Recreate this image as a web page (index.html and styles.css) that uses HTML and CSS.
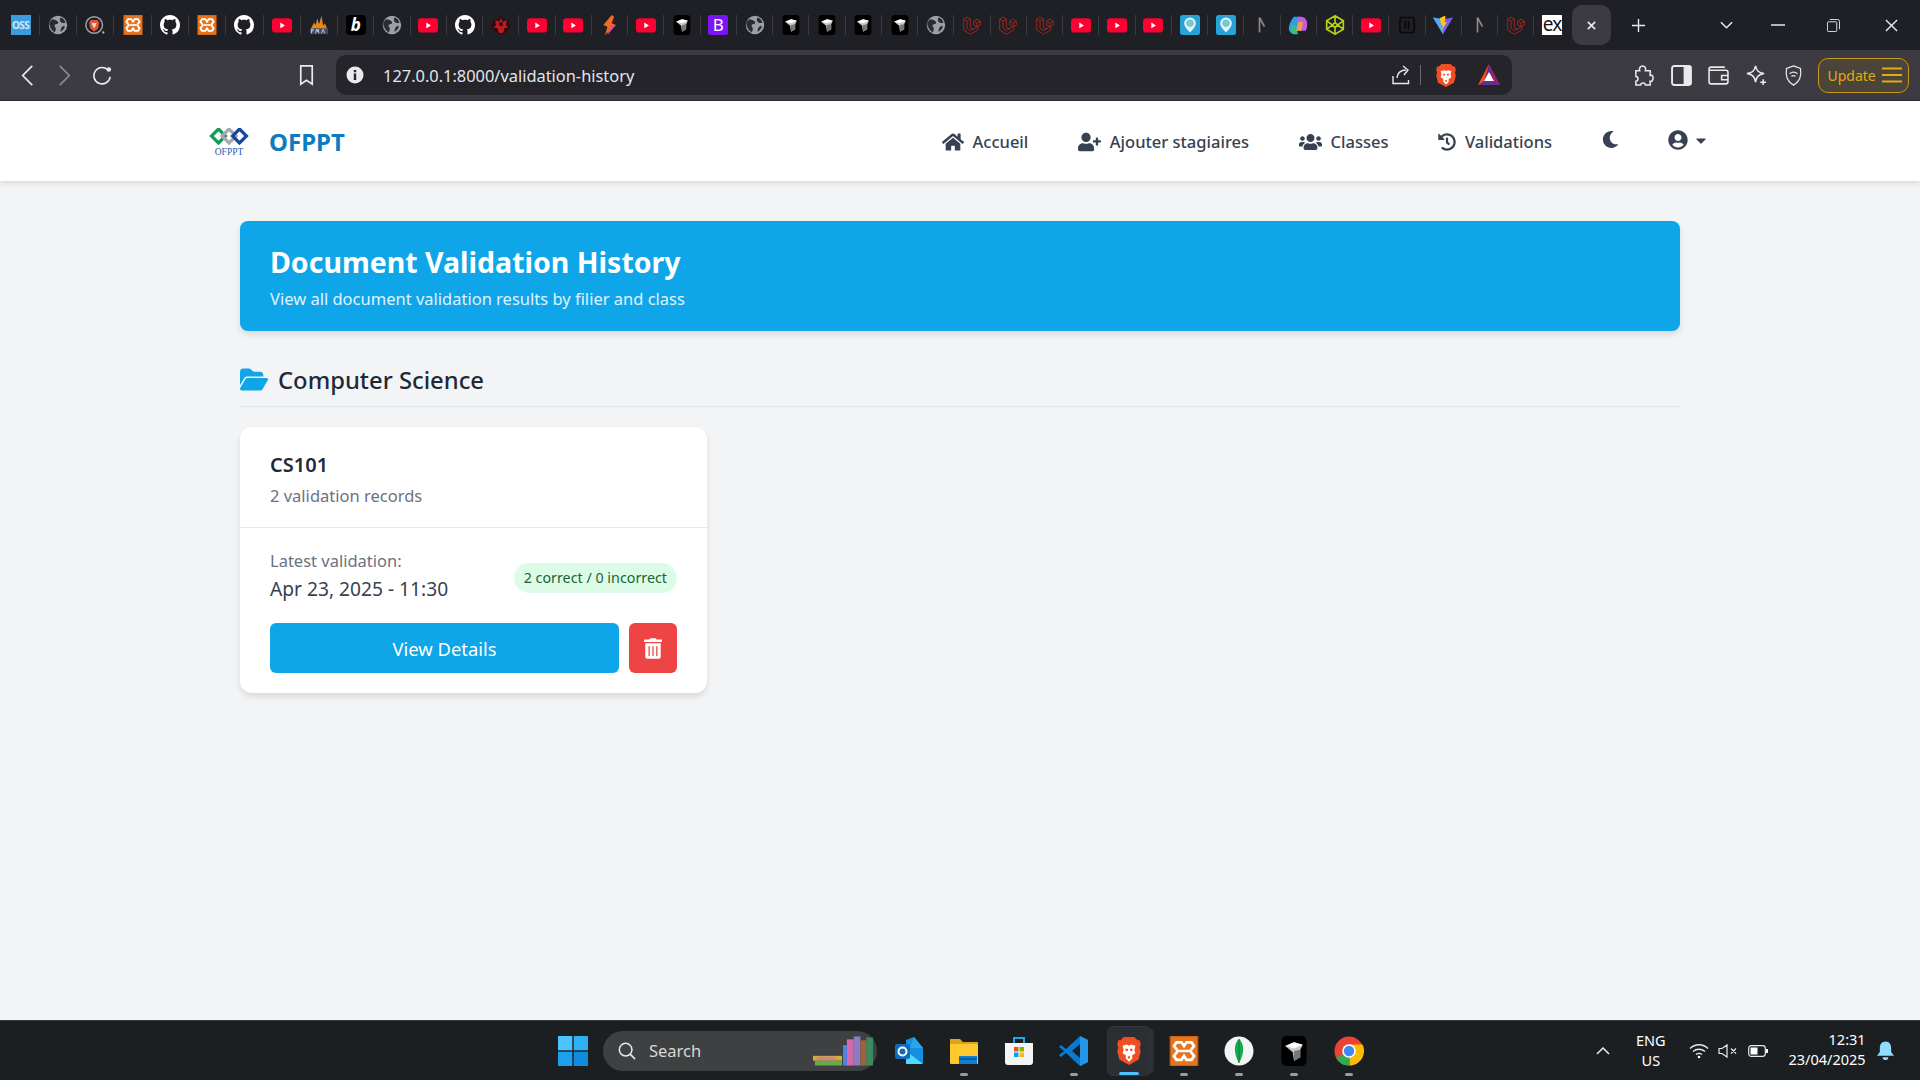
FILE: index.html
```html
<!DOCTYPE html>
<html lang="en">
<head>
  <meta charset="UTF-8">
  <title>Document Validation History</title>
  <link rel="stylesheet" href="styles.css">
</head>
<body>
  <svg class="defs" aria-hidden="true">
    <symbol id="globe" viewBox="0 0 24 24"><circle cx="12" cy="12" r="11" fill="#9aa0a6"/><path d="M5 5c3 0 5 1 7 3 1 2-1 3-3 3-2 1-1 3 0 4 1 2 0 4-1 6-3-2-5-5-6-8-1-3 0-6 3-8zM15 3c3 1 5 3 6 6-2 1-4 1-6-1-1-2-1-3 0-5zM19 13c1 0 1 1 1 2-1 2-3 4-5 5 0-3 1-6 4-7z" fill="#2b2c30"/></symbol>
    <symbol id="brave" viewBox="0 0 24 28"><path d="M7 1h10l3 3h2l1 4-1 3 1 3-2 8-9 5-9-5-2-8 1-3-1-3 1-4h2z" fill="#f04e23"/><path d="M6 9l4-1 2 1 2-1 4 1-1 4 1 3-3 2v3l-3 3-3-3v-3l-3-2 1-3z" fill="#fff"/><path d="M8.500 12h2.500v2H9zM13 12h2.500L15 14h-2zM11 19h2v2h-2z" fill="#f04e23"/></symbol>
    <symbol id="brave-ring" viewBox="0 0 24 24"><circle cx="11" cy="12" r="10" fill="none" stroke="#9aa0a6" stroke-width="1.800"/><path d="M7 6h8l2 3-1 7-5 4-5-4-1-7z" fill="#e0523a"/><path d="M8 9l3 1 3-1-1 4-2 3-2-3z" fill="#f5d5cc"/><circle cx="22" cy="21" r="1.400" fill="#bbb"/></symbol>
    <symbol id="xampp" viewBox="0 0 24 24"><rect x="1" width="22" height="24" fill="#e8741e"/><rect x="1" width="22" height="24" fill="none" stroke="#b85a14"/><path d="M6 5h4l2 3 2-3h4l2 3-3 4 3 4-2 3h-4l-2-3-2 3H6l-2-3 3-4-3-4z" fill="none" stroke="#fff" stroke-width="2.200"/><path d="M8 12h8" stroke="#fff" stroke-width="2"/></symbol>
    <symbol id="gh" viewBox="0 0 16 16"><path fill="#fff" d="M8 0C3.58 0 0 3.58 0 8c0 3.54 2.29 6.53 5.47 7.59.4.07.55-.17.55-.38 0-.19-.01-.82-.01-1.49-2.01.37-2.53-.49-2.69-.94-.09-.23-.48-.94-.82-1.13-.28-.15-.68-.52-.01-.53.63-.01 1.08.58 1.23.82.72 1.21 1.87.87 2.33.66.07-.52.28-.87.51-1.07-1.78-.2-3.64-.89-3.64-3.95 0-.87.31-1.59.82-2.15-.08-.2-.36-1.02.08-2.12 0 0 .67-.21 2.2.82.64-.18 1.32-.27 2-.27.68 0 1.36.09 2 .27 1.53-1.04 2.2-.82 2.2-.82.44 1.1.16 1.92.08 2.12.51.56.82 1.27.82 2.15 0 3.07-1.87 3.75-3.65 3.95.29.25.54.73.54 1.48 0 1.07-.01 1.93-.01 2.2 0 .21.15.46.55.38A8.013 8.013 0 0016 8c0-4.42-3.58-8-8-8z"/></symbol>
    <symbol id="yt" viewBox="0 0 24 24"><rect y="4" width="24" height="17" rx="4" fill="#ff0033"/><path d="M10 9l5.500 3.500L10 16z" fill="#fff"/></symbol>
    <symbol id="pma" viewBox="0 0 24 24"><path d="M2 17L6 9l2 3 2-8 2 7 3-10 2 12 2-3 3 7z" fill="#e08a1e"/><rect x="1" y="16" width="22" height="7" fill="#3c4a68"/><path d="M3 22v-5h2v2H3M8 22l1-5 1 3 1-3 1 5M15 22l2-5 2 5" fill="none" stroke="#cfd6e6" stroke-width="1"/></symbol>
    <symbol id="red" viewBox="0 0 24 24"><path d="M12 1l3 4 6 1 2 8-5 7-6 2-6-2-5-7 2-8 6-1z" fill="#2a0a0c"/><path d="M12 3l2 5 5-2-1 6 3 3-5 1-1 5-3 1-3-1-1-5-5-1 3-3-1-6 5 2z" fill="#c4161c"/><circle cx="12" cy="11" r="2.500" fill="#1f1f26"/></symbol>
    <symbol id="bolt" viewBox="0 0 24 24"><path d="M14 0L4 12l5 2-3 10 13-12-5-2 3-8z" fill="#f26b21"/><path d="M14 12l5 0-10 12 3-10z" fill="#d8518e"/></symbol>
    <symbol id="cube" viewBox="0 0 24 24"><rect x="2" width="20" height="24" rx="4" fill="#000"/><path d="M5 8l7-3 7 2-2 4v6l-5 3-1-7z" fill="#c8c8c8"/><path d="M12 12l5-1v6l-5 3z" fill="#777"/><path d="M5 8l7 2 7-3-7-2z" fill="#fff"/></symbol>
    <symbol id="lara" viewBox="0 0 24 24"><path d="M2 5l4-2.500 4 2.500-4 2.500zM2 5v13l8 5 9-5v-4.500l-9 5-4-2.500V7.500M10 5v10l4 2M14 7.500l4-2.500 4 2.500-4 2.500zM14 7.500v4.500l4 2 4-2V7.500M18 10v4" fill="none" stroke="#b0281e" stroke-width="1"/></symbol>
    <symbol id="pin" viewBox="0 0 24 24"><rect width="24" height="24" rx="3" fill="#27a3d7"/><path d="M12 21c-4-4-7-7-7-11a7 7 0 0 1 14 0c0 4-3 7-7 11z" fill="#e4f4f8"/><circle cx="12" cy="10" r="4.500" fill="#79c7cf"/></symbol>
    <symbol id="copilot" viewBox="0 0 24 24"><path d="M7 2h8l-4 18c-1 2-2 3-4 3-3 0-6-3-6-7 0-4 2-9 6-14z" fill="#2e9fe6"/><path d="M4 12l5 0 3 11H7c-3 0-4-5-3-11z" fill="#38c07a"/><path d="M12 2h4c4 0 7 4 7 9 0 4-1 7-2 8h-8z" fill="#c45be0"/><path d="M12 8h6l-2 11h-6z" fill="#f0a13c"/></symbol>
    <symbol id="green" viewBox="0 0 24 24"><path d="M12 1l10 6v10l-10 6-10-6V7zM12 1v8M2 7l7 5-7 5M22 7l-7 5 7 5M12 23v-8M9 12l3-3 3 3-3 3z" fill="none" stroke="#b5d219" stroke-width="2"/></symbol>
    <symbol id="dark" viewBox="0 0 24 24"><path d="M4 3h16M4 21h16M4 3c-1 6-1 12 0 18M20 3c1 6 1 12 0 18M10 7v10M14 7v10" fill="none" stroke="#0a0a0a" stroke-width="2"/></symbol>
    <symbol id="vite" viewBox="0 0 24 24"><path d="M0 3l12 20L24 3l-12 2z" fill="#7a5cf0"/><path d="M0 3l12 20 0-18z" fill="#55a8f5"/><path d="M14 1L8 4l2 8-1 1 3-1-1 6 6-10-3 1 1-7z" fill="#ffc517"/></symbol>
    <symbol id="nn" viewBox="0 0 24 24"><path d="M9 3v18M9 3l6 11" fill="none" stroke="#8a8a8a" stroke-width="2"/></symbol>
    <symbol id="bat" viewBox="0 0 24 24"><path d="M12 1L1 22h22z" fill="#662d91"/><path d="M12 1L1 22l6-4z" fill="#ff5000"/><path d="M12 1l11 21-6-4z" fill="#9e1f63"/><path d="M12 9l-5 9h10z" fill="#fff"/></symbol>
  </svg>

  <div class="tabstrip">
    <span class="fav"><span class="oss">OSS</span></span>
    <span class="fav"><svg><use href="#globe"/></svg></span>
    <span class="fav"><svg><use href="#brave-ring"/></svg></span>
    <span class="fav"><svg><use href="#xampp"/></svg></span>
    <span class="fav"><svg><use href="#gh"/></svg></span>
    <span class="fav"><svg><use href="#xampp"/></svg></span>
    <span class="fav"><svg><use href="#gh"/></svg></span>
    <span class="fav"><svg><use href="#yt"/></svg></span>
    <span class="fav"><svg><use href="#pma"/></svg></span>
    <span class="fav"><span class="bb">b</span></span>
    <span class="fav"><svg><use href="#globe"/></svg></span>
    <span class="fav"><svg><use href="#yt"/></svg></span>
    <span class="fav"><svg><use href="#gh"/></svg></span>
    <span class="fav"><svg><use href="#red"/></svg></span>
    <span class="fav"><svg><use href="#yt"/></svg></span>
    <span class="fav"><svg><use href="#yt"/></svg></span>
    <span class="fav"><svg><use href="#bolt"/></svg></span>
    <span class="fav"><svg><use href="#yt"/></svg></span>
    <span class="fav"><svg><use href="#cube"/></svg></span>
    <span class="fav"><span class="boot">B</span></span>
    <span class="fav"><svg><use href="#globe"/></svg></span>
    <span class="fav"><svg><use href="#cube"/></svg></span>
    <span class="fav"><svg><use href="#cube"/></svg></span>
    <span class="fav"><svg><use href="#cube"/></svg></span>
    <span class="fav"><svg><use href="#cube"/></svg></span>
    <span class="fav"><svg><use href="#globe"/></svg></span>
    <span class="fav"><svg><use href="#lara"/></svg></span>
    <span class="fav"><svg><use href="#lara"/></svg></span>
    <span class="fav"><svg><use href="#lara"/></svg></span>
    <span class="fav"><svg><use href="#yt"/></svg></span>
    <span class="fav"><svg><use href="#yt"/></svg></span>
    <span class="fav"><svg><use href="#yt"/></svg></span>
    <span class="fav"><svg><use href="#pin"/></svg></span>
    <span class="fav"><svg><use href="#pin"/></svg></span>
    <span class="fav"><svg><use href="#nn"/></svg></span>
    <span class="fav"><svg><use href="#copilot"/></svg></span>
    <span class="fav"><svg><use href="#green"/></svg></span>
    <span class="fav"><svg><use href="#yt"/></svg></span>
    <span class="fav"><svg><use href="#dark"/></svg></span>
    <span class="fav"><svg><use href="#vite"/></svg></span>
    <span class="fav"><svg><use href="#nn"/></svg></span>
    <span class="fav"><svg><use href="#lara"/></svg></span>
    <span class="fav"><span class="ex">ex</span></span>
    <span class="active-tab">
      <svg class="line-icon" viewBox="0 0 12 12"><path d="M2 2l8 8M10 2l-8 8" stroke-width="1.800"/></svg>
    </span>
    <svg class="line-icon new-tab" viewBox="0 0 14 14"><path d="M7 0v14M0 7h14"/></svg>
    <svg class="line-icon tab-menu" viewBox="0 0 14 9"><path d="M1 1l6 6 6-6" stroke-width="1.600"/></svg>
    <svg class="line-icon win-min" viewBox="0 0 14 2"><path d="M0 1h14"/></svg>
    <svg class="line-icon win-max" viewBox="0 0 14 14"><path d="M3 .5h8.500a2 2 0 0 1 2 2V11M1.500 3h8a1 1 0 0 1 1 1v8.500a1 1 0 0 1-1 1h-8a1 1 0 0 1-1-1V4a1 1 0 0 1 1-1z" stroke-width="1"/></svg>
    <svg class="line-icon win-close" viewBox="0 0 14 14"><path d="M1 1l12 12M13 1L1 13"/></svg>
  </div>

  <div class="toolbar">
    <span class="tb-btn"><svg class="line-icon" viewBox="0 0 12 22"><path d="M11 1L1 11l10 10" stroke-width="1.800"/></svg></span>
    <span class="tb-btn dim"><svg class="line-icon" viewBox="0 0 12 22"><path d="M1 1l10 10L1 21" stroke-width="1.800"/></svg></span>
    <span class="tb-btn"><svg class="line-icon reload" viewBox="0 0 22 22"><path d="M18 6a9 9 0 1 0 2 7" stroke-width="1.800"/><circle cx="18.500" cy="5" r="2.500" fill="#e8eaed" stroke="none"/></svg></span>
    <span class="tb-btn bookmark"><svg class="line-icon" viewBox="0 0 16 22"><path d="M2 1h12v19l-6-4-6 4z" stroke-width="1.800"/></svg></span>
    <div class="urlbar">
      <svg class="info" viewBox="0 0 18 18"><circle cx="9" cy="9" r="8.500" fill="#e8eaed"/><path d="M7.800 7.500h2.400V14H7.800zM7.800 4h2.400v2.200H7.800z" fill="#24242a"/></svg>
      <span class="url">127.0.0.1:8000/validation-history</span>
      <span class="url-end">
        <svg class="line-icon share" viewBox="0 0 20 20"><path d="M1 11v7.500h15.500V15M5 13c0-5 4-8 9-8M11 1l5 4-4 5" stroke-width="1.400"/></svg>
        <span class="url-sep"></span>
        <svg class="shield-brave"><use href="#brave"/></svg>
        <svg class="bat-icon"><use href="#bat"/></svg>
      </span>
    </div>
    <span class="tb-btn first-ext"><svg class="line-icon" viewBox="0 0 22 22"><path d="M3 6h4c-1-3 1-5 3-5s4 2 3 5h5v5c3-1 3 2 3 3s-1 4-3 3v4h-5c0-3-5-3-5 0H3v-4c3 0 3-5 0-5z" stroke-width="1.600"/></svg></span>
    <span class="tb-btn"><svg class="side-icon" viewBox="0 0 20 20"><rect x="1" y="1" width="18" height="18" rx="2" fill="none" stroke="#e8eaed" stroke-width="1.800"/><rect x="12" y="1" width="7" height="18" fill="#e8eaed"/></svg></span>
    <span class="tb-btn"><svg class="line-icon" viewBox="0 0 20 20"><path d="M16 2H3a2 2 0 0 0-2 2v12a2 2 0 0 0 2 2h14a2 2 0 0 0 2-2V7a2 2 0 0 0-2-2H1M13 10h6v4h-6z" stroke-width="1.500"/></svg></span>
    <span class="tb-btn"><svg class="line-icon" viewBox="0 0 22 22"><path d="M10 1c1 5 3 7 9 8-6 1-8 3-9 9-1-6-3-8-9-9 6-1 8-3 9-8zM18 15v6M15 18h6" stroke-width="1.600"/></svg></span>
    <span class="tb-btn"><svg class="line-icon" viewBox="0 0 20 24"><path d="M10 1l8 3c1 8 0 14-8 19C2 18 1 12 2 4zM5.500 10c3-2.500 6-2.500 9 0M7.500 13c2-1.500 3-1.500 5 0" stroke-width="1.400"/></svg></span>
    <span class="update">Update
      <svg class="update-lines" viewBox="0 0 20 16"><path d="M0 1.500h20M0 8h20M0 14.500h20" stroke="#e0a916" stroke-width="1.800"/></svg>
    </span>
  </div>

  <nav class="navbar">
    <a class="brand">
      <svg class="logo" viewBox="0 0 40 28">
        <path d="M9.500 1l7 7-7 7-7-7z" fill="none" stroke="#0f9d58" stroke-width="3.200"/>
        <path d="M20 1l7 7-7 7-7-7z" fill="none" stroke="#a5a8ad" stroke-width="3.200"/>
        <path d="M30.500 1l7 7-7 7-7-7z" fill="none" stroke="#17479e" stroke-width="3.200"/>
        <text x="20" y="27" class="logo-text">OFPPT</text>
      </svg>
      <span class="brand-name">OFPPT</span>
    </a>
    <ul class="nav-links">
      <li><svg class="nav-icon home" viewBox="0 0 576 512"><path d="M280.37 148.26L96 300.11V464a16 16 0 0 0 16 16l112.06-.29a16 16 0 0 0 15.92-16V368a16 16 0 0 1 16-16h64a16 16 0 0 1 16 16v95.64a16 16 0 0 0 16 16.05L464 480a16 16 0 0 0 16-16V300L295.67 148.26a12.19 12.19 0 0 0-15.3 0zM571.6 251.47L488 182.56V44.05a12 12 0 0 0-12-12h-56a12 12 0 0 0-12 12v72.61L318.47 43a48 48 0 0 0-61 0L4.34 251.47a12 12 0 0 0-1.6 16.9l25.5 31A12 12 0 0 0 45.15 301l235.22-193.74a12.19 12.19 0 0 1 15.3 0L530.9 301a12 12 0 0 0 16.9-1.6l25.5-31a12 12 0 0 0-1.7-16.93z"/></svg>Accueil</li>
      <li><svg class="nav-icon wide" viewBox="0 0 640 512"><path d="M624 208h-64v-64c0-8.8-7.2-16-16-16h-32c-8.8 0-16 7.2-16 16v64h-64c-8.8 0-16 7.2-16 16v32c0 8.8 7.2 16 16 16h64v64c0 8.8 7.2 16 16 16h32c8.8 0 16-7.2 16-16v-64h64c8.8 0 16-7.2 16-16v-32c0-8.8-7.2-16-16-16zm-400 48c70.7 0 128-57.3 128-128S294.7 0 224 0 96 57.3 96 128s57.3 128 128 128zm89.6 32h-16.7c-22.2 10.2-46.9 16-72.9 16s-50.6-5.8-72.9-16h-16.7C60.2 288 0 348.2 0 422.4V464c0 26.5 21.5 48 48 48h352c26.5 0 48-21.5 48-48v-41.6c0-74.2-60.2-134.4-134.4-134.4z"/></svg>Ajouter stagiaires</li>
      <li><svg class="nav-icon wide" viewBox="0 0 640 512"><path d="M96 224c35.3 0 64-28.7 64-64s-28.7-64-64-64-64 28.7-64 64 28.7 64 64 64zm448 0c35.3 0 64-28.7 64-64s-28.7-64-64-64-64 28.7-64 64 28.7 64 64 64zm32 32h-64c-17.6 0-33.5 7.1-45.1 18.6 40.3 22.1 68.9 62 75.1 109.4h66c17.7 0 32-14.3 32-32v-32c0-35.3-28.7-64-64-64zm-256 0c61.9 0 112-50.1 112-112S381.9 32 320 32 208 82.1 208 144s50.1 112 112 112zm76.8 32h-8.3c-20.8 10-43.9 16-68.5 16s-47.6-6-68.5-16h-8.3C179.6 288 128 339.6 128 403.2V432c0 26.5 21.5 48 48 48h288c26.5 0 48-21.5 48-48v-28.8c0-63.6-51.6-115.2-115.2-115.2zm-223.7-13.4C161.5 263.1 145.6 256 128 256H64c-35.3 0-64 28.7-64 64v32c0 17.7 14.3 32 32 32h65.9c6.3-47.4 34.9-87.3 75.2-109.4z"/></svg>Classes</li>
      <li><svg class="nav-icon history" viewBox="0 0 512 512"><path d="M504 255.531c.253 136.64-111.18 248.372-247.82 248.468-59.015.042-113.223-20.53-155.822-54.911-11.077-8.94-11.905-25.541-1.839-35.607l11.267-11.267c8.609-8.609 22.353-9.551 31.891-1.984C173.062 425.135 212.781 440 256 440c101.705 0 184-82.311 184-184 0-101.705-82.311-184-184-184-48.814 0-93.149 18.969-126.068 49.932l50.754 50.754c10.08 10.08 2.941 27.314-11.313 27.314H24c-8.837 0-16-7.163-16-16V38.627c0-14.254 17.234-21.393 27.314-11.314l49.372 49.372C129.209 34.136 189.552 8 256 8c136.81 0 247.747 110.78 248 247.531zm-180.912 78.784l9.823-12.63c8.138-10.463 6.253-25.542-4.21-33.679L288 256.349V152c0-13.255-10.745-24-24-24h-16c-13.255 0-24 10.745-24 24v135.651l65.409 50.874c10.463 8.137 25.541 6.253 33.679-4.21z"/></svg>Validations</li>
      <li class="moon"><svg class="nav-icon" viewBox="0 0 512 512"><path d="M283.211 512c78.962 0 151.079-35.925 198.857-94.792 7.068-8.708-.639-21.43-11.562-19.35-124.203 23.654-238.262-71.576-238.262-196.954 0-72.222 38.662-138.635 101.498-174.394 9.686-5.512 7.25-20.197-3.756-22.23A258.156 258.156 0 0 0 283.211 0c-141.309 0-256 114.511-256 256 0 141.309 114.511 256 256 256z"/></svg></li>
      <li class="account">
        <svg class="nav-icon" viewBox="0 0 496 512"><path d="M248 8C111 8 0 119 0 256s111 248 248 248 248-111 248-248S385 8 248 8zm0 96c48.6 0 88 39.4 88 88s-39.4 88-88 88-88-39.4-88-88 39.4-88 88-88zm0 344c-58.7 0-111.3-26.6-146.5-68.2 18.8-35.4 55.6-59.8 98.5-59.8 2.4 0 4.8.4 7.1 1.1 13 4.2 26.6 6.9 40.9 6.9 14.3 0 28-2.7 40.9-6.9 2.3-.7 4.7-1.1 7.1-1.1 42.9 0 79.7 24.4 98.5 59.8C359.3 421.4 306.7 448 248 448z"/></svg>
        <svg class="caret" viewBox="0 0 320 512"><path d="M31.3 192h257.3c17.8 0 26.7 21.5 14.1 34.1L174.1 354.8c-7.8 7.8-20.5 7.8-28.3 0L17.2 226.1C4.6 213.5 13.5 192 31.3 192z"/></svg>
      </li>
    </ul>
  </nav>

  <main class="content">
    <section class="hero">
      <h1>Document Validation History</h1>
      <p>View all document validation results by filier and class</p>
    </section>

    <h2 class="filiere">
      <svg class="folder" viewBox="0 0 576 512"><path d="M88.700 223.800L0 375.800V96C0 60.700 28.700 32 64 32H181.500c17 0 33.300 6.700 45.300 18.700l26.500 26.500c12 12 28.300 18.700 45.300 18.700H416c35.300 0 64 28.700 64 64v32H144c-22.800 0-43.800 12.100-55.300 31.800zm27.600 16.100C122.100 230 132.600 224 144 224H544c11.500 0 22 6.100 27.700 16.100s5.700 22.200-.1 32.100l-112 192C453.900 474 443.400 480 432 480H32c-11.500 0-22-6.100-27.700-16.100s-5.700-22.200 .1-32.100l112-192z"/></svg>
      Computer Science
    </h2>

    <article class="card">
      <div class="card-head">
        <h3>CS101</h3>
        <p>2 validation records</p>
      </div>
      <div class="card-body">
        <div class="latest">
          <div>
            <p class="latest-label">Latest validation:</p>
            <p class="latest-date">Apr 23, 2025 - 11:30</p>
          </div>
          <span class="badge">2 correct / 0 incorrect</span>
        </div>
        <div class="actions">
          <button class="btn-view">View Details</button>
          <button class="btn-delete">
            <svg viewBox="0 0 448 512"><path d="M32 464a48 48 0 0 0 48 48h288a48 48 0 0 0 48-48V128H32zm272-256a16 16 0 0 1 32 0v224a16 16 0 0 1-32 0zm-96 0a16 16 0 0 1 32 0v224a16 16 0 0 1-32 0zm-96 0a16 16 0 0 1 32 0v224a16 16 0 0 1-32 0zM432 32H312l-9.4-18.7A24 24 0 0 0 281.1 0H166.8a23.72 23.72 0 0 0-21.4 13.3L136 32H16A16 16 0 0 0 0 48v32a16 16 0 0 0 16 16h416a16 16 0 0 0 16-16V48a16 16 0 0 0-16-16z"/></svg>
          </button>
        </div>
      </div>
    </article>
  </main>

  <footer class="taskbar">
    <svg class="start" viewBox="0 0 30 30">
      <rect width="14.300" height="14.300" fill="#4cc2ff"/><rect x="15.700" width="14.300" height="14.300" fill="#2fb0f5"/>
      <rect y="15.700" width="14.300" height="14.300" fill="#1d9ff0"/><rect x="15.700" y="15.700" width="14.300" height="14.300" fill="#0f8be0"/>
    </svg>
    <div class="search">
      <svg class="line-icon search-icon" viewBox="0 0 20 20"><circle cx="8.500" cy="8.500" r="7" stroke-width="1.700"/><path d="M13.500 13.500L19 19" stroke-width="1.700"/></svg>
      <span>Search</span>
      <svg class="books" viewBox="0 0 64 32">
        <rect x="0" y="21" width="30" height="5" fill="#c9b13c"/><rect x="4" y="22" width="20" height="3" fill="#e07a9a"/>
        <rect x="2" y="26" width="28" height="5" fill="#6aa84f"/>
        <rect x="31" y="10" width="4" height="21" fill="#4a86e8"/><rect x="35" y="4" width="7" height="27" fill="#d66aa8"/>
        <rect x="42" y="1" width="7" height="30" fill="#8e7cc3"/><rect x="49" y="5" width="6" height="26" fill="#a0623a"/>
        <rect x="55" y="2" width="7" height="29" fill="#3d8a5f"/>
      </svg>
    </div>
    <div class="apps">
      <span class="app"><svg viewBox="0 0 30 30"><path d="M12 4l8-3 9 11v15l-17 1z" fill="#1490df"/><path d="M20 1l9 11H16z" fill="#28a8ea"/><path d="M12 15l17 13H12z" fill="#50d9ff"/><rect x="1" y="8" width="15" height="15" rx="2" fill="#0f6cbd"/><circle cx="8.500" cy="15.500" r="4" fill="none" stroke="#fff" stroke-width="2"/></svg></span>
      <span class="app running"><svg viewBox="0 0 30 30"><path d="M1 3h10l3 3h15v5H1z" fill="#d9a520"/><rect x="1" y="8" width="28" height="20" rx="1" fill="#ffc82c"/><rect x="10" y="20" width="18" height="8" fill="#0f7fd4"/><rect x="10" y="22" width="18" height="2" fill="#0b5fa8"/></svg></span>
      <span class="app"><svg viewBox="0 0 30 30"><path d="M10 7V2h10v5" fill="none" stroke="#2aa4e8" stroke-width="2"/><path d="M1 7h28v19a3 3 0 0 1-3 3H4a3 3 0 0 1-3-3z" fill="#f4f4f4"/><rect x="10" y="11" width="4.500" height="4.500" fill="#f25022"/><rect x="15.500" y="11" width="4.500" height="4.500" fill="#7fba00"/><rect x="10" y="16.500" width="4.500" height="4.500" fill="#00a4ef"/><rect x="15.500" y="16.500" width="4.500" height="4.500" fill="#ffb900"/></svg></span>
      <span class="app running"><svg viewBox="0 0 30 30"><path d="M21 0l8 4v22l-8 4L7 17l-5 4-2-2 5-4-5-4 2-2 5 4z" fill="#0a7ad1"/><path d="M21 8l-8 7 8 7z" fill="#1c1f22"/><path d="M21 0l8 4v22l-8 4z" fill="#2196e8"/></svg></span>
      <span class="app active"><svg viewBox="0 0 24 28"><use href="#brave"/></svg></span>
      <span class="app running"><svg viewBox="0 0 24 24"><use href="#xampp"/></svg></span>
      <span class="app running"><svg viewBox="0 0 30 30"><circle cx="15" cy="15" r="14.500" fill="#f4f4f4"/><path d="M15 3c5 4 6 14 0 24-6-10-5-20 0-24z" fill="#13aa52"/><path d="M15 3v24" stroke="#0b7a3a"/></svg></span>
      <span class="app running"><svg viewBox="0 0 24 24"><use href="#cube"/></svg></span>
      <span class="app running"><svg viewBox="0 0 30 30"><circle cx="15" cy="15" r="14.500" fill="#ea4335"/><path d="M15 15L2 22a14.500 14.500 0 0 0 14 7.500z" fill="#34a853"/><path d="M15 8.500h13.500a14.500 14.500 0 0 1-12.500 21z" fill="#fbbc05"/><circle cx="15" cy="15" r="6.800" fill="#fff"/><circle cx="15" cy="15" r="5.200" fill="#4285f4"/></svg></span>
    </div>
    <div class="tray">
      <svg class="line-icon tray-up" viewBox="0 0 14 8"><path d="M1 7l6-6 6 6" stroke-width="1.500"/></svg>
      <div class="lang"><span>ENG</span><span>US</span></div>
      <svg class="line-icon wifi" viewBox="0 0 20 16"><path d="M1 5.500c5-5 13-5 18 0M4 8.500c3.500-3 8.500-3 12 0M7 11.500c2-1.500 4-1.500 6 0" stroke-width="1.300"/><circle cx="10" cy="14" r="1.300" fill="#fff" stroke="none"/></svg>
      <svg class="line-icon speaker" viewBox="0 0 20 16"><path d="M1 5.500h3L9 2v12L4 10.500H1zM13 5.500l5 5M18 5.500l-5 5" stroke-width="1.200"/></svg>
      <svg class="line-icon battery" viewBox="0 0 20 12"><rect x=".7" y=".7" width="16.600" height="10.600" rx="2.500" stroke-width="1.200"/><rect x="2.500" y="2.500" width="7" height="7" fill="#fff" stroke="none"/><rect x="18" y="4" width="2" height="4" fill="#fff" stroke="none"/></svg>
      <div class="clock"><span>12:31</span><span>23/04/2025</span></div>
      <svg class="bell" viewBox="0 0 18 20"><path d="M9 0c4 0 6 3 6 7v4l3 4H0l3-4V7c0-4 2-7 6-7z" fill="#8fdcff"/><path d="M6 16.500h6a3 3 0 0 1-6 0z" fill="#8fdcff"/></svg>
    </div>
  </footer>
</body>
</html>
```

FILE: styles.css
```css
* {
  box-sizing: border-box;
}
body {
  margin: 0;
  display: flex;
  flex-direction: column;
  height: 1080px;
  overflow: hidden;
  font-family: "Noto Sans", "Open Sans", Arial, sans-serif;
  background-color: #f3f4f6;
  color: #1f2937;
}
h1, h2, h3, p, ul {
  margin: 0;
  padding: 0;
}
.defs {
  position: absolute;
  width: 0;
  height: 0;
}
.line-icon {
  fill: none;
  stroke: #e8eaed;
  stroke-width: 1.5;
}

/* browser tab strip */
.tabstrip {
  display: flex;
  align-items: center;
  height: 50px;
  padding-left: 1.5px;
  background-color: #1f1f26;
}
.fav {
  display: flex;
  flex: none;
  align-items: center;
  justify-content: center;
  width: 36.26px;
  height: 20px;
  border-left: 1px solid #3a3a40;
}
.fav:nth-child(-n+9) {
  width: 37.3px;
}
.fav:first-child {
  border-left-color: transparent;
}
.fav svg {
  width: 20px;
  height: 20px;
}
.oss, .bb, .boot, .ex {
  display: block;
  width: 20px;
  height: 20px;
  line-height: 20px;
  text-align: center;
}
.oss {
  background: #3b9ddd;
  color: #cfe8f7;
  font-size: 10px;
  font-weight: 700;
  letter-spacing: -0.5px;
}
.bb {
  background: #000;
  border-radius: 4px;
  color: #fff;
  font-size: 17px;
  font-weight: 700;
  font-style: italic;
}
.boot {
  background: #7a14f5;
  border-radius: 2px;
  color: #fff;
  font-size: 17px;
}
.ex {
  background: #fff;
  color: #111;
  font-size: 19px;
  line-height: 18px;
  letter-spacing: -1px;
}
.active-tab {
  display: flex;
  flex: none;
  align-items: center;
  justify-content: center;
  width: 39px;
  height: 40px;
  margin-left: 2.5px;
  border-radius: 10px;
  background-color: #3b3b41;
}
.active-tab svg {
  width: 11px;
  height: 11px;
}
.new-tab {
  width: 13px;
  height: 13px;
  margin-left: 20.5px;
}
.tab-menu {
  width: 13px;
  height: 9px;
  margin-left: 75px;
}
.win-min {
  width: 14px;
  height: 2px;
  margin-left: 38px;
}
.win-max {
  width: 13px;
  height: 13px;
  margin-left: 42px;
}
.win-close {
  width: 13px;
  height: 13px;
  margin-left: 45px;
}

/* browser toolbar */
.toolbar {
  display: flex;
  align-items: center;
  height: 50px;
  padding-left: 8.5px;
  background-color: #3b3b41;
}
.tb-btn {
  display: flex;
  flex: none;
  align-items: center;
  justify-content: center;
  width: 37.5px;
  height: 40px;
}
.tb-btn svg {
  width: 21px;
  height: 21px;
}
.tb-btn .reload {
  width: 20px;
  height: 20px;
}
.tb-btn.dim svg {
  opacity: 0.45;
}
.bookmark {
  margin-left: 167px;
}
.urlbar {
  display: flex;
  flex: none;
  align-items: center;
  width: 1176px;
  height: 40px;
  margin-left: 10.5px;
  padding-left: 10px;
  border-radius: 10px;
  background-color: #24242a;
}
.info {
  flex: none;
  width: 18px;
  height: 18px;
}
.url {
  margin-left: 19px;
  font-size: 16.4px;
  color: #e3e6ea;
}
.url-end {
  display: flex;
  align-items: center;
  margin-left: auto;
  padding-right: 11px;
}
.share {
  width: 20px;
  height: 20px;
}
.url-sep {
  width: 1px;
  height: 20px;
  margin: 0 14px 0 8.5px;
  background-color: #6a6a70;
}
.shield-brave {
  width: 22px;
  height: 25px;
}
.bat-icon {
  width: 24px;
  height: 24px;
  margin-left: 20px;
}
.first-ext {
  margin-left: 113px;
}
.update {
  display: flex;
  flex: none;
  align-items: center;
  justify-content: space-between;
  width: 91px;
  height: 35px;
  margin-left: 5px;
  padding: 0 6px 0 9px;
  border: 1.5px solid #c99a15;
  border-radius: 10px;
  background-color: #4b4438;
  color: #e0a916;
  font-size: 14px;
}
.update-lines {
  width: 20px;
  height: 16px;
}

/* site navbar */
.navbar {
  display: flex;
  flex: none;
  align-items: center;
  justify-content: space-between;
  position: relative;
  height: 81px;
  padding: 1px 214px 0 209px;
  border-top: 1px solid #2a2a2e;
  background-color: #fff;
  box-shadow: 0 2px 5px rgba(0, 0, 0, 0.12);
}
.brand {
  display: flex;
  align-items: center;
}
.logo {
  width: 40px;
  height: 28px;
}
.logo-text {
  font-family: "Liberation Serif", serif;
  font-size: 9.5px;
  text-anchor: middle;
  fill: #2a5caa;
}
.brand-name {
  margin-left: 20px;
  font-size: 24px;
  font-weight: 700;
  color: #0c7cbf;
}
.nav-links {
  display: flex;
  align-items: center;
  gap: 49.5px;
  list-style: none;
  font-size: 16.5px;
  font-weight: 500;
  color: #374151;
}
.nav-links li {
  display: flex;
  align-items: center;
}
.nav-icon {
  flex: none;
  width: 20px;
  height: 20px;
  margin-right: 9px;
  fill: #374151;
}
.nav-icon.home {
  width: 22px;
}
.nav-icon.wide {
  width: 23px;
  margin-right: 9px;
}
.nav-icon.history {
  width: 18px;
  height: 18px;
}
.moon .nav-icon {
  width: 17px;
  height: 17px;
  margin: -4px 0 0 0;
}
.account .nav-icon {
  margin: -4px 8px 0 0;
}
.caret {
  width: 10px;
  height: 17px;
  margin-top: -2px;
  fill: #374151;
}

/* page */
.content {
  flex: 1;
  padding: 40px 240px 0;
}
.hero {
  height: 110px;
  padding: 22px 30px 0;
  border-radius: 8px;
  background-color: #0ea5e9;
  box-shadow: 0 4px 6px rgba(0, 0, 0, 0.1);
  color: #fff;
}
.hero h1 {
  font-size: 28.5px;
  font-weight: 700;
  line-height: 38px;
}
.hero p {
  margin-top: 5px;
  font-size: 16.5px;
  line-height: 25px;
  color: #e0f2fe;
}
.filiere {
  display: flex;
  align-items: center;
  height: 76px;
  padding-top: 22px;
  border-bottom: 1px solid #e5e7eb;
  font-size: 23.8px;
  font-weight: 500;
  color: #1f2937;
}
.folder {
  flex: none;
  width: 28px;
  height: 25px;
  margin-right: 10px;
  fill: #0ea5e9;
}
.card {
  width: 467px;
  height: 266px;
  margin-top: 20px;
  border-radius: 12px;
  background-color: #fff;
  box-shadow: 0 4px 6px rgba(0, 0, 0, 0.1);
}
.card-head {
  height: 101px;
  padding: 23px 30px 0;
  border-bottom: 1px solid #e5e7eb;
}
.card-head h3 {
  font-size: 20px;
  font-weight: 600;
  line-height: 30px;
  color: #1f2937;
}
.card-head p {
  margin-top: 2px;
  font-size: 16.5px;
  line-height: 28px;
  color: #6b7280;
}
.card-body {
  padding: 20px 30px;
}
.latest {
  display: flex;
  align-items: center;
  justify-content: space-between;
}
.latest-label {
  font-size: 16.5px;
  line-height: 26px;
  color: #6b7280;
}
.latest-date {
  margin-top: 1px;
  font-size: 19.2px;
  line-height: 27px;
  color: #374151;
}
.badge {
  position: relative;
  top: 3px;
  padding: 0 10px;
  border-radius: 15px;
  background-color: #dcfce7;
  font-size: 14.3px;
  line-height: 30px;
  color: #166534;
}
.actions {
  display: flex;
  gap: 10px;
  margin-top: 21px;
}
button {
  height: 50px;
  border: none;
  border-radius: 6px;
  color: #fff;
  font-family: inherit;
  cursor: pointer;
}
.btn-view {
  flex: 1;
  background-color: #0ea5e9;
  font-size: 18.4px;
}
.btn-delete {
  display: flex;
  flex: none;
  align-items: center;
  justify-content: center;
  width: 48px;
  background-color: #ef4444;
}
.btn-delete svg {
  width: 18px;
  height: 21px;
  fill: #fff;
}

/* windows taskbar */
.taskbar {
  display: flex;
  flex: none;
  align-items: center;
  height: 60px;
  padding-left: 558px;
  border-top: 1px solid #33363a;
  background-color: #1c1f22;
  color: #fff;
}
.start {
  flex: none;
  width: 30px;
  height: 30px;
}
.search {
  display: flex;
  flex: none;
  align-items: center;
  position: relative;
  width: 274px;
  height: 40px;
  margin-left: 15px;
  padding-left: 15px;
  border-radius: 20px;
  background-color: #3e4042;
  font-size: 16.5px;
  color: #d8d8d8;
}
.search-icon {
  width: 18px;
  height: 18px;
  margin-right: 13px;
}
.books {
  position: absolute;
  top: 4px;
  right: 2px;
  width: 62px;
  height: 32px;
}
.apps {
  display: flex;
  align-items: center;
  margin-left: 4.5px;
}
.app {
  display: flex;
  flex: none;
  align-items: center;
  justify-content: center;
  position: relative;
  width: 55px;
  height: 50px;
}
.app svg {
  width: 30px;
  height: 30px;
}
.app.running::after, .app.active::after {
  content: "";
  position: absolute;
  bottom: 0;
  left: 50%;
  width: 8px;
  height: 3px;
  margin-left: -4px;
  border-radius: 2px;
  background-color: #9a9da0;
}
.app.active {
  width: 44px;
  margin: 0 5.5px;
  border: 1px solid #33363b;
  border-radius: 6px;
  background-color: #2b2e33;
  box-shadow: 6px 0 0 -3px #2b2e33;
}
.app.active::after {
  width: 20px;
  margin-left: -10px;
  background-color: #4cc2ff;
}
.tray {
  display: flex;
  align-items: center;
  margin-left: 219.5px;
  font-size: 14.5px;
}
.tray-up {
  width: 14px;
  height: 8px;
}
.lang, .clock {
  display: flex;
  flex-direction: column;
  line-height: 20px;
}
.lang {
  align-items: center;
  margin-bottom: 1px;
  margin-left: 26px;
}
.clock {
  align-items: flex-end;
  width: 84px;
  margin-bottom: 3px;
  margin-left: 14px;
}
.wifi {
  width: 20px;
  height: 16px;
  margin-left: 23px;
}
.speaker {
  width: 20px;
  height: 16px;
  margin-left: 9px;
}
.battery {
  width: 20px;
  height: 12px;
  margin-left: 10px;
}
.bell {
  width: 17px;
  height: 20px;
  margin-left: 11px;
}
```
